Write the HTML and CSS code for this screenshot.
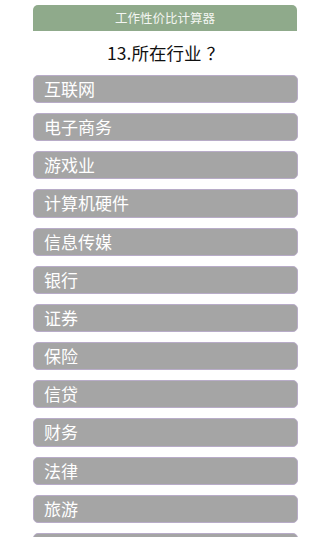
FILE: index.html
```html
<!DOCTYPE html>
<html lang="zh-CN">
<head>
<meta charset="utf-8">
<title>工作性价比计算器</title>
<link rel="stylesheet" href="styles.css">
</head>
<body>
<div class="page">
  <div class="header">工作性价比计算器</div>
  <div class="question">13.所在行业<span class="qmark">？</span></div>
  <ul class="options">
    <li class="option">互联网</li>
    <li class="option">电子商务</li>
    <li class="option">游戏业</li>
    <li class="option">计算机硬件</li>
    <li class="option">信息传媒</li>
    <li class="option">银行</li>
    <li class="option">证券</li>
    <li class="option">保险</li>
    <li class="option">信贷</li>
    <li class="option">财务</li>
    <li class="option">法律</li>
    <li class="option">旅游</li>
    <li class="option">房地产</li>
  </ul>
</div>
</body>
</html>
```

FILE: styles.css
```css
html, body {
  margin: 0;
  padding: 0;
  background: #ffffff;
  overflow: hidden;
}
body {
  font-family: "Noto Sans CJK SC", "Noto Sans", sans-serif;
}
.page {
  width: 265px;
  margin: 0 0 0 33px;
  padding-top: 5px;
}
.header {
  width: 264px;
  height: 26px;
  line-height: 26px;
  background: #8faa8b;
  color: #f4f6f2;
  font-size: 12.5px;
  text-align: center;
  border-radius: 5px 5px 0 0;
}
.question {
  height: 44px;
  line-height: 44px;
  text-align: center;
  font-size: 17.5px;
  color: #111111;
}
.qmark {
  padding-left: 5px;
}
.options {
  list-style: none;
  margin: 0;
  padding: 0;
  display: flex;
  flex-direction: column;
  gap: 10px;
}
.option {
  box-sizing: border-box;
  height: 28.17px;
  line-height: 25px;
  padding: 0 0 0 10px;
  background: #a5a5a5;
  border: 1px solid #b8acc8;
  border-radius: 5px;
  color: #ffffff;
  font-size: 17px;
  overflow: hidden;
}
```
